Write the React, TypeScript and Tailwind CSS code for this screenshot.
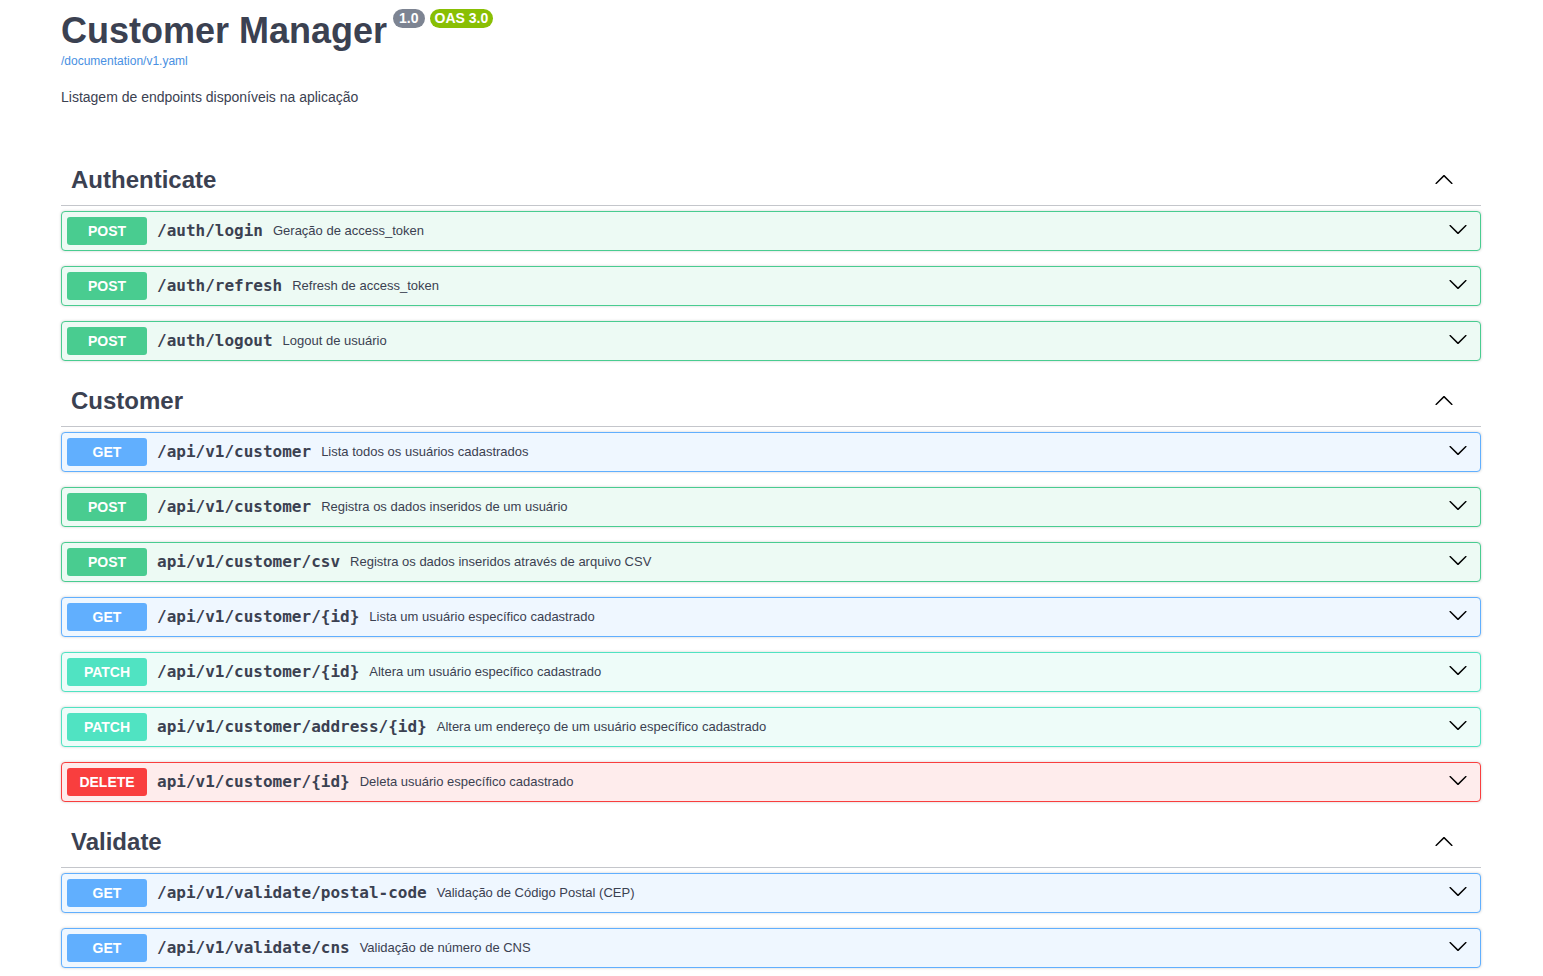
import React from 'react';

type Method = 'GET' | 'POST' | 'PATCH' | 'DELETE';

const methodStyles: Record<Method, { row: string; badge: string }> = {
  GET: { row: 'bg-[#eff7ff] border-[#61affe]', badge: 'bg-[#61affe]' },
  POST: { row: 'bg-[#edfaf4] border-[#49cc90]', badge: 'bg-[#49cc90]' },
  PATCH: { row: 'bg-[#eefcf9] border-[#50e3c2]', badge: 'bg-[#50e3c2]' },
  DELETE: { row: 'bg-[#feecec] border-[#f93e3e]', badge: 'bg-[#f93e3e]' },
};

const sections: { tag: string; ops: { method: Method; path: string; summary: string }[] }[] = [
  {
    tag: 'Authenticate',
    ops: [
      { method: 'POST', path: '/auth/login', summary: 'Geração de access_token' },
      { method: 'POST', path: '/auth/refresh', summary: 'Refresh de access_token' },
      { method: 'POST', path: '/auth/logout', summary: 'Logout de usuário' },
    ],
  },
  {
    tag: 'Customer',
    ops: [
      { method: 'GET', path: '/api/v1/customer', summary: 'Lista todos os usuários cadastrados' },
      { method: 'POST', path: '/api/v1/customer', summary: 'Registra os dados inseridos de um usuário' },
      { method: 'POST', path: 'api/v1/customer/csv', summary: 'Registra os dados inseridos através de arquivo CSV' },
      { method: 'GET', path: '/api/v1/customer/{id}', summary: 'Lista um usuário específico cadastrado' },
      { method: 'PATCH', path: '/api/v1/customer/{id}', summary: 'Altera um usuário específico cadastrado' },
      { method: 'PATCH', path: 'api/v1/customer/address/{id}', summary: 'Altera um endereço de um usuário específico cadastrado' },
      { method: 'DELETE', path: 'api/v1/customer/{id}', summary: 'Deleta usuário específico cadastrado' },
    ],
  },
  {
    tag: 'Validate',
    ops: [
      { method: 'GET', path: '/api/v1/validate/postal-code', summary: 'Validação de Código Postal (CEP)' },
      { method: 'GET', path: '/api/v1/validate/cns', summary: 'Validação de número de CNS' },
    ],
  },
];

// swagger-ui's arrow
function Arrow({ up = false, className = '' }: { up?: boolean; className?: string }) {
  return (
    <svg width="20" height="20" viewBox="0 0 20 20" className={`${up ? 'rotate-180' : ''} ${className}`}>
      <path
        fill="#000"
        d="M17.418 6.109c.272-.268.709-.268.979 0s.271.701 0 .969l-7.908 7.83c-.27.268-.707.268-.979 0l-7.908-7.83c-.27-.268-.27-.701 0-.969.271-.268.709-.268.979 0L10 13.25l7.418-7.141z"
      />
    </svg>
  );
}

export default function App() {
  return (
    <div className="min-h-screen bg-white font-['Liberation_Sans',Arial,sans-serif] text-[#3b4151]">
      <div className="mx-auto max-w-[1461px] pl-5 pr-[21px]">
        {/* Info */}
        <div className="flex items-start pt-[9px]">
          <h2 className="mt-px text-[36px] font-bold leading-[41px]">Customer Manager</h2>
          <div className="ml-[6px] flex gap-[5px]">
            <span className="rounded-full bg-[#7d8492] px-[6px] py-[2px] text-[14px] font-bold leading-[15px] text-white">1.0</span>
            <span className="rounded-full bg-[#89bf04] px-[5px] py-[2px] text-[14px] font-bold leading-[15px] text-white">OAS 3.0</span>
          </div>
        </div>
        <a className="mt-[3px] block text-[12px] leading-[14px] text-[#4990e2]">/documentation/v1.yaml</a>
        <p className="mt-[21px] text-[14px] leading-[16px]">Listagem de endpoints disponíveis na aplicação</p>

        {/* Operations */}
        <div className="mt-[50px]">
          {sections.map((s) => (
            <div key={s.tag}>
              <div className="mb-[5px] flex h-[51px] items-center border-b border-[#c4c6cb] pl-[10px] pr-[27px]">
                <h3 className="text-[24px] font-bold">{s.tag}</h3>
                <Arrow up className="ml-auto" />
              </div>
              {s.ops.map((op, i) => (
                <div
                  key={i}
                  className={`mb-[15px] flex h-[40px] items-center rounded-[4px] border px-[5px] shadow-[0_0_3px_rgba(0,0,0,0.19)] ${methodStyles[op.method].row}`}
                >
                  <span
                    className={`flex h-[28px] w-[80px] items-center justify-center rounded-[3px] text-[14px] font-bold text-white ${methodStyles[op.method].badge}`}
                  >
                    {op.method}
                  </span>
                  <span className="px-[10px] font-['DejaVu_Sans_Mono',monospace] text-[16px] font-bold">{op.path}</span>
                  <span className="text-[13px]">{op.summary}</span>
                  <Arrow className="ml-auto mb-[5px] mr-[7px]" />
                </div>
              ))}
            </div>
          ))}
        </div>
      </div>
    </div>
  );
}
